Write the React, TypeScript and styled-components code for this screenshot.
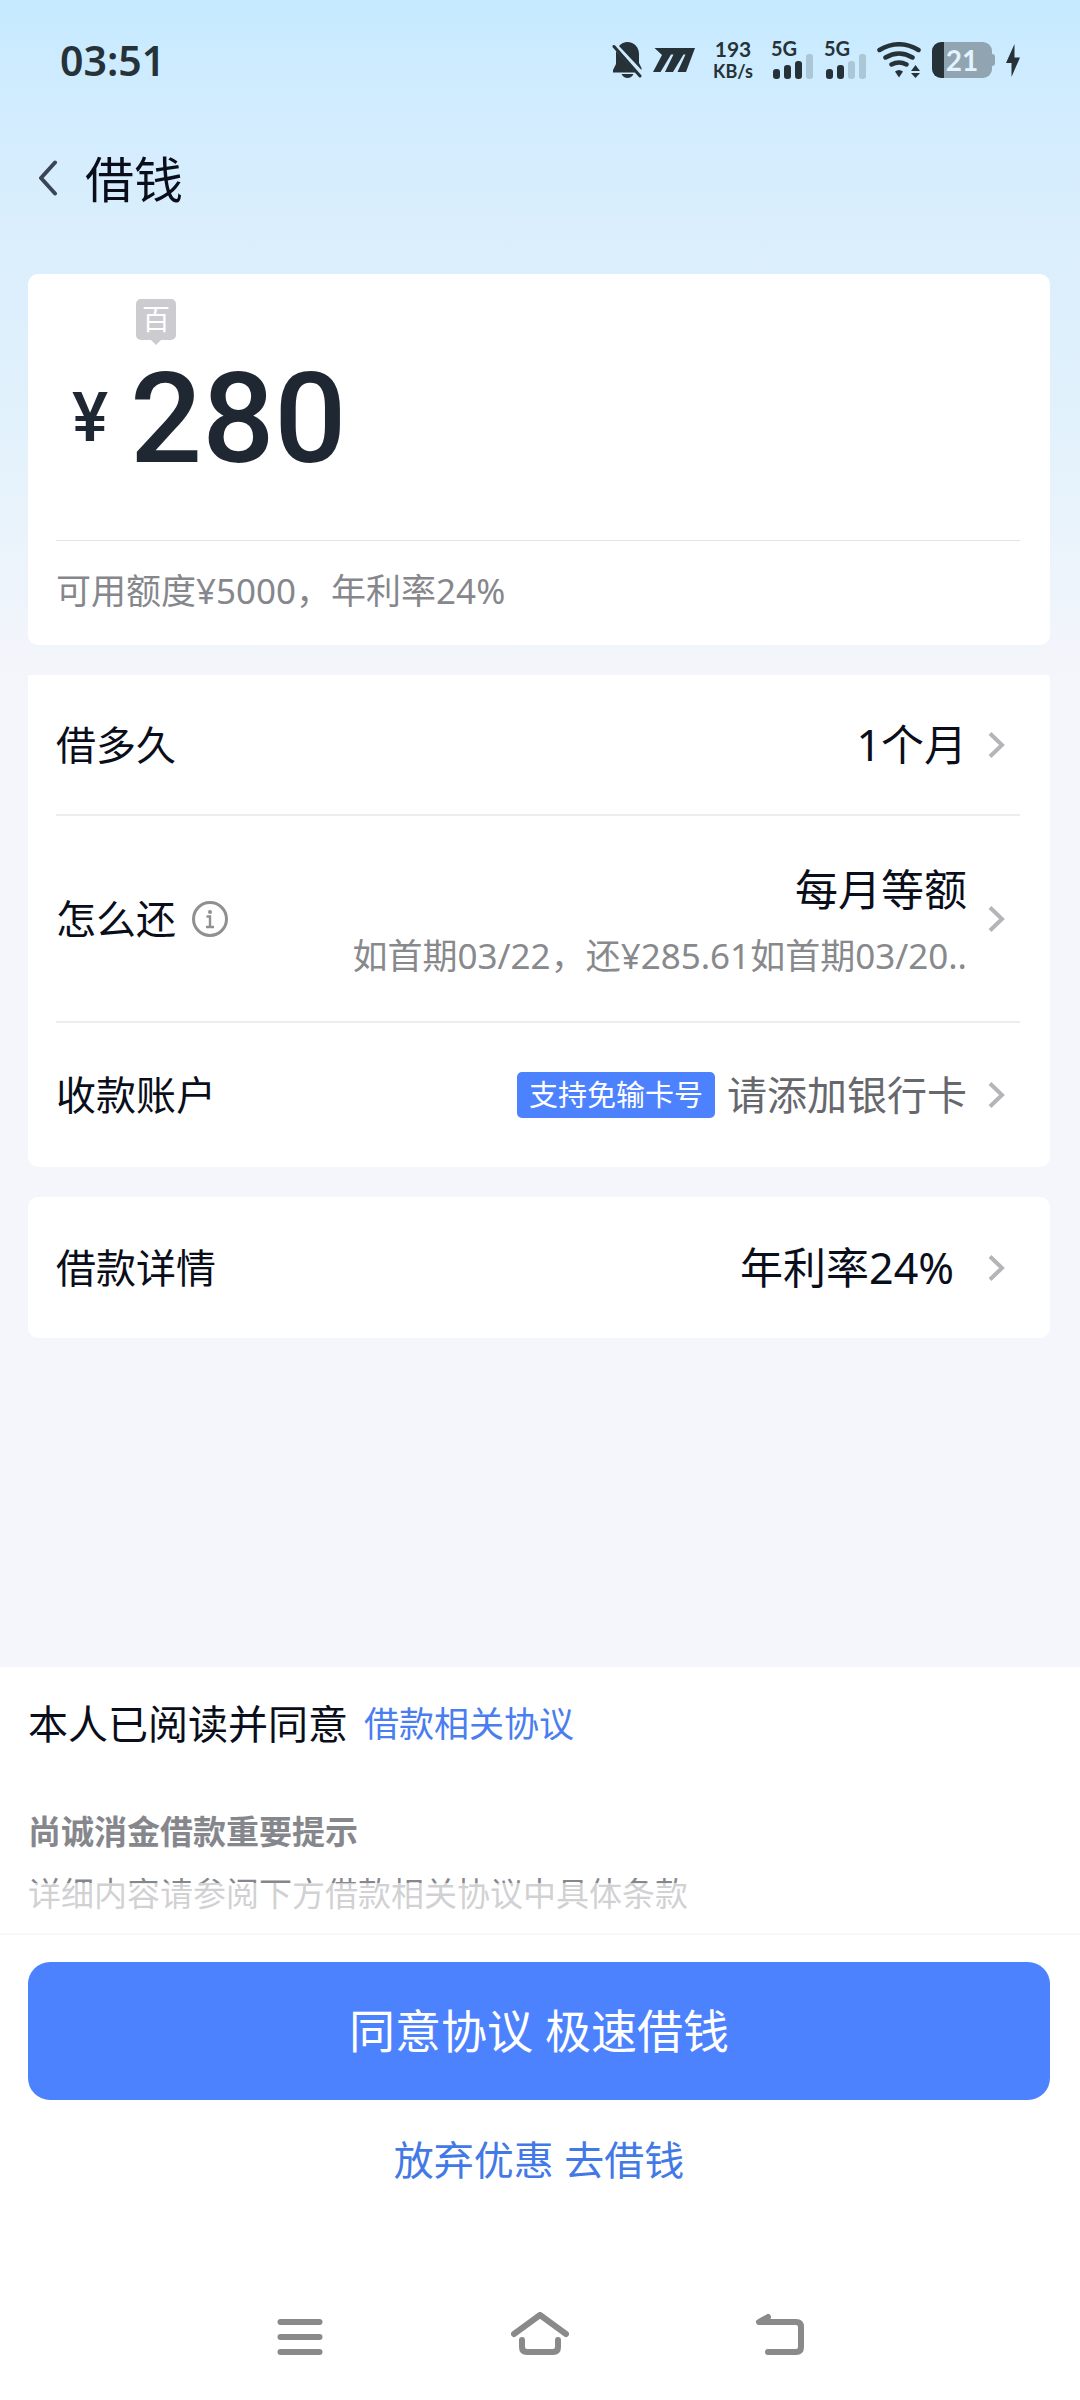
import React, { useState } from 'react';
import styled, { createGlobalStyle, css } from 'styled-components';

const GlobalStyle = createGlobalStyle`
  *, *::before, *::after { box-sizing: border-box; }
  body {
    margin: 0;
    background: #f4f6fb;
    color: #0a0e1a;
    font-family: "Noto Sans", "Noto Sans CJK SC", sans-serif;
  }
  button, input { font: inherit; color: inherit; }
`;

const plainButton = css`
  border: 0;
  padding: 0;
  background: none;
  cursor: pointer;
`;

const Screen = styled.div`
  display: flex;
  flex-direction: column;
  min-height: 100vh;
  background: linear-gradient(#c5eaff 0, #d0ecff 90px, #dbeefc 240px, #e0f1fc 400px, #f3f5fb 660px, #f4f6fb 700px);
`;

const StatusBar = styled.div`
  display: flex;
  align-items: center;
  justify-content: space-between;
  height: 120px;
  padding: 0 60px;
  color: #263238;
`;

const Clock = styled.time`
  font-size: 41px;
  font-weight: 600;
  line-height: 48px;
`;

const StatusIcons = styled.div`
  display: flex;
  align-items: center;
  gap: 11px;
  font-family: Lato, sans-serif;
  font-weight: 700;
  svg { display: block; }
`;

const Speed = styled.div`
  width: 54px;
  text-align: center;
`;

const SpeedLine = styled.div<{ $size: number }>`
  font-size: ${(p) => p.$size}px;
  line-height: 22px;
`;

const SignalBox = styled.div`
  width: 42px;
  font-size: 20px;
  line-height: 12px;
`;

const Battery = styled.div`
  display: flex;
  align-items: center;
`;

const BatteryBody = styled.div`
  display: flex;
  align-items: center;
  justify-content: center;
  width: 60px;
  height: 36px;
  border-radius: 9px;
  background: linear-gradient(90deg, #263238 12px, #90a4b1 12px);
  color: #e3f3ff;
  font-size: 28px;
  line-height: 36px;
`;

const BatteryTip = styled.div`
  width: 3px;
  height: 12px;
  border-radius: 0 3px 3px 0;
  background: #90a4b1;
`;

const Header = styled.header`
  display: flex;
  align-items: center;
  gap: 27px;
  height: 118px;
  padding: 0 36px;
`;

const BackButton = styled.button`
  ${plainButton}
  display: flex;
`;

const Title = styled.h1`
  margin: 0;
  font-size: 49px;
  font-weight: 400;
  line-height: 72px;
`;

const Main = styled.main`
  display: flex;
  flex-direction: column;
  gap: 30px;
  padding: 36px 30px 40px 28px;
`;

const Card = styled.section<{ $flatTop?: boolean }>`
  padding: 0 30px 0 28px;
  border-radius: ${(p) => (p.$flatTop ? '2px 2px 10px 10px' : '10px')};
  background: #fff;
`;

const AmountArea = styled.div`
  padding: 25px 0 54px 16px;
`;

const UnitTag = styled.div`
  position: relative;
  width: 40px;
  height: 41px;
  margin-left: 64px;
  border-radius: 5px;
  background: #cbcbd0;
  color: #fff;
  font-size: 28px;
  line-height: 41px;
  text-align: center;
  &::after {
    content: '';
    position: absolute;
    top: 100%;
    left: 15px;
    border: 5px solid transparent;
    border-top-color: #cbcbd0;
    border-bottom: 0;
  }
`;

const AmountField = styled.label`
  display: flex;
  align-items: center;
  gap: 18px;
  height: 136px;
  margin-top: 10px;
  color: #1f2733;
  font-family: Roboto, sans-serif;
  font-weight: 500;
`;

const Currency = styled.span`
  width: 40px;
  font-size: 68px;
  line-height: 80px;
`;

const AmountInput = styled.input`
  flex: 1;
  min-width: 0;
  height: 136px;
  padding: 0;
  border: 0;
  outline: 0;
  background: none;
  font-size: 127px;
`;

const Quota = styled.p`
  margin: 0;
  padding: 24px 0 28px;
  border-top: 1px solid #e4e4e6;
  color: #86878c;
  font-size: 35px;
  line-height: 52px;
`;

const Row = styled.button<{ $height: number }>`
  ${plainButton}
  display: flex;
  align-items: center;
  justify-content: space-between;
  width: 100%;
  min-height: ${(p) => p.$height}px;
  padding-right: 14px;
  text-align: right;
  & + & { border-top: 2px solid #ededee; }
`;

const RowLabel = styled.span`
  display: flex;
  align-items: center;
  gap: 16px;
  font-size: 40px;
  line-height: 60px;
  white-space: nowrap;
`;

const RowEnd = styled.span<{ $gap?: number }>`
  display: flex;
  align-items: center;
  gap: ${(p) => p.$gap ?? 21}px;
`;

const Value = styled.span`
  font-size: 43px;
  line-height: 64px;
`;

const Stack = styled.span`
  display: flex;
  flex-direction: column;
  gap: 4px;
  padding-top: 6px;
`;

const Note = styled.span`
  color: #88898c;
  font-size: 35px;
  line-height: 60px;
`;

const BankHint = styled.span`
  display: flex;
  align-items: center;
  gap: 12px;
  color: #67686d;
  font-size: 40px;
  line-height: 60px;
`;

const Badge = styled.span`
  padding: 0 12px;
  border-radius: 5px;
  background: #4d82ff;
  color: #fff;
  font-size: 29px;
  line-height: 46px;
`;

const Footer = styled.footer`
  margin-top: auto;
  background: #fff;
`;

const Terms = styled.div`
  position: relative;
  padding: 24px 28px 8px;
  border-bottom: 2px solid #f8f8f9;
  &::after {
    content: '';
    position: absolute;
    inset: auto 0 0;
    height: 50px;
    background: rgba(255, 255, 255, 0.62);
    pointer-events: none;
  }
`;

const Consent = styled.p`
  display: flex;
  align-items: center;
  gap: 16px;
  margin: 0;
  font-size: 40px;
  line-height: 66px;
`;

const TermsLink = styled.a`
  color: #4a7df0;
  font-size: 35px;
  text-decoration: none;
`;

const NoticeTitle = styled.h2`
  margin: 44px 0 0;
  color: #86878c;
  font-size: 33px;
  font-weight: 700;
  line-height: 62px;
`;

const Notice = styled.p`
  margin: 0;
  color: #86878c;
  font-size: 33px;
  line-height: 62px;
`;

const Actions = styled.div`
  display: flex;
  flex-direction: column;
  gap: 20px;
  padding: 27px 30px 74px 28px;
`;

const Primary = styled.button`
  ${plainButton}
  height: 138px;
  padding-bottom: 6px;
  border-radius: 22px;
  background: #4d82ff;
  color: #fff;
  font-size: 46px;
`;

const Secondary = styled.button`
  ${plainButton}
  height: 80px;
  padding-bottom: 4px;
  color: #4379e6;
  font-size: 40px;
`;

const NavBar = styled.nav`
  display: flex;
  justify-content: center;
  gap: 180px;
  height: 126px;
`;

const NavButton = styled.button`
  ${plainButton}
  display: flex;
  align-items: center;
  justify-content: center;
  width: 60px;
`;

const Chevron = () => (
  <svg width="18" height="26" viewBox="0 0 18 26" fill="none" stroke="#b4b5b8" strokeWidth="4" aria-hidden="true">
    <path d="M2 1.5 14 13 2 24.5" />
  </svg>
);

const InfoIcon = () => (
  <svg width="36" height="36" viewBox="0 0 36 36" fill="none" stroke="#8f9092" aria-hidden="true">
    <circle cx="18" cy="18" r="16.500" strokeWidth="3" />
    <circle cx="18" cy="11" r="2" fill="#8f9092" stroke="none" />
    <path d="M14.500 15.500H18V26M14 26H22" strokeWidth="2.400" />
  </svg>
);

const Signal = ({ level }: { level: number }) => (
  <SignalBox>
    5G
    <svg width="42" height="25" viewBox="0 0 42 25" aria-hidden="true">
      {[10, 14, 18, 25].map((h, i) => (
        <rect key={h} x={2 + i * 11} y={25 - h} width="7" height={h} rx="3" fill={i < level ? '#263238' : '#abc6d6'} />
      ))}
    </svg>
  </SignalBox>
);

const MutedBell = () => (
  <svg width="30" height="36" viewBox="0 0 30 36" fill="#263238" aria-hidden="true">
    <path d="M7 4Q10.500 0 15.500 0C22 0 27 5 27 12V21L29.500 26V28Z" />
    <path d="M4 9 24 30.500H1V28L4 22Z" />
    <path d="M9.500 32H21.500Q19.500 36 15.500 36 11.500 36 9.500 32Z" />
    <path d="M2 4.500 28 34" stroke="#263238" strokeWidth="3" strokeLinecap="round" />
  </svg>
);

const MLogo = () => (
  <svg width="42" height="24" viewBox="0 0 42 24" fill="#263238" aria-hidden="true">
    <path d="M1.500 0H42L33 24H24.500L32.500 6.500H30.500L20 24H12L20.500 6.500H18L7.500 24H0L9 7Z" />
  </svg>
);

const Wifi = () => (
  <svg width="44" height="36" viewBox="0 0 44 36" fill="none" stroke="#263238" strokeWidth="4.500" strokeLinecap="round" aria-hidden="true">
    <path d="M2.500 8Q22-3.500 41.500 8M8.500 15.500Q22 7.500 35.500 15.500M14.500 22.500Q22 18.500 29.500 22.500" />
    <path d="M18 29.500Q22 26.500 26 29.500L22 35.500Z" fill="#263238" stroke="none" />
    <path d="M34 29 38.500 23 43 29ZM34 31H43L38.500 36Z" fill="#263238" stroke="none" />
  </svg>
);

const Bolt = () => (
  <svg width="14" height="33" viewBox="0 0 14 33" fill="#263238" aria-hidden="true">
    <path d="M8.500 0 0 19H5.500V33L14 13.500H8.500Z" />
  </svg>
);

export default function App() {
  const [amount, setAmount] = useState('280');
  return (
    <Screen>
      <GlobalStyle />
      <StatusBar>
        <Clock>03:51</Clock>
        <StatusIcons>
          <MutedBell />
          <MLogo />
          <Speed>
            <SpeedLine $size={21}>193</SpeedLine>
            <SpeedLine $size={18}>KB/s</SpeedLine>
          </Speed>
          <Signal level={3} />
          <Signal level={2} />
          <Wifi />
          <Battery>
            <BatteryBody>21</BatteryBody>
            <BatteryTip />
          </Battery>
          <Bolt />
        </StatusIcons>
      </StatusBar>
      <Header>
        <BackButton aria-label="返回">
          <svg width="22" height="38" viewBox="0 0 22 38" fill="none" stroke="#3a4656" strokeWidth="4" strokeLinecap="round" strokeLinejoin="round">
            <path d="M19 2.500 5 18 19 33.500" />
          </svg>
        </BackButton>
        <Title>借钱</Title>
      </Header>
      <Main>
        <Card>
          <AmountArea>
            <UnitTag>百</UnitTag>
            <AmountField>
              <Currency>¥</Currency>
              <AmountInput
                aria-label="借款金额"
                inputMode="numeric"
                value={amount}
                onChange={(e) => setAmount(e.target.value)}
              />
            </AmountField>
          </AmountArea>
          <Quota>可用额度¥5000，年利率24%</Quota>
        </Card>
        <Card $flatTop>
          <Row $height={139}>
            <RowLabel>借多久</RowLabel>
            <RowEnd>
              <Value>1个月</Value>
              <Chevron />
            </RowEnd>
          </Row>
          <Row $height={207}>
            <RowLabel>
              怎么还
              <InfoIcon />
            </RowLabel>
            <RowEnd>
              <Stack>
                <Value>每月等额</Value>
                <Note>如首期03/22，还¥285.61如首期03/20..</Note>
              </Stack>
              <Chevron />
            </RowEnd>
          </Row>
          <Row $height={146}>
            <RowLabel>收款账户</RowLabel>
            <RowEnd>
              <BankHint>
                <Badge>支持免输卡号</Badge>
                请添加银行卡
              </BankHint>
              <Chevron />
            </RowEnd>
          </Row>
        </Card>
        <Card>
          <Row $height={141}>
            <RowLabel>借款详情</RowLabel>
            <RowEnd $gap={34}>
              <Value>年利率24%</Value>
              <Chevron />
            </RowEnd>
          </Row>
        </Card>
      </Main>
      <Footer>
        <Terms>
          <Consent>
            本人已阅读并同意
            <TermsLink href="#terms">借款相关协议</TermsLink>
          </Consent>
          <NoticeTitle>尚诚消金借款重要提示</NoticeTitle>
          <Notice>详细内容请参阅下方借款相关协议中具体条款</Notice>
        </Terms>
        <Actions>
          <Primary>同意协议 极速借钱</Primary>
          <Secondary>放弃优惠 去借钱</Secondary>
        </Actions>
        <NavBar>
          <NavButton aria-label="最近任务">
            <svg width="46" height="38" viewBox="0 0 46 38" stroke="#8a8a8a" strokeWidth="6" strokeLinecap="round">
              <path d="M3.500 4H42.500M3.500 19H42.500M3.500 34H42.500" />
            </svg>
          </NavButton>
          <NavButton aria-label="主屏幕">
            <svg width="58" height="50" viewBox="0 0 58 50" fill="none" stroke="#8a8a8a" strokeWidth="6" strokeLinecap="round" strokeLinejoin="round">
              <path d="M3 22 29 3 55 22M11 28V35Q11 40 16 40H42Q47 40 47 35V28" />
            </svg>
          </NavButton>
          <NavButton aria-label="返回上一页">
            <svg width="50" height="50" viewBox="0 0 50 50" fill="none" stroke="#8a8a8a" strokeWidth="6" strokeLinecap="round" strokeLinejoin="round">
              <path d="M13 5 4 10H41Q46 10 46 15V35Q46 40 41 40H13" />
            </svg>
          </NavButton>
        </NavBar>
      </Footer>
    </Screen>
  );
}
